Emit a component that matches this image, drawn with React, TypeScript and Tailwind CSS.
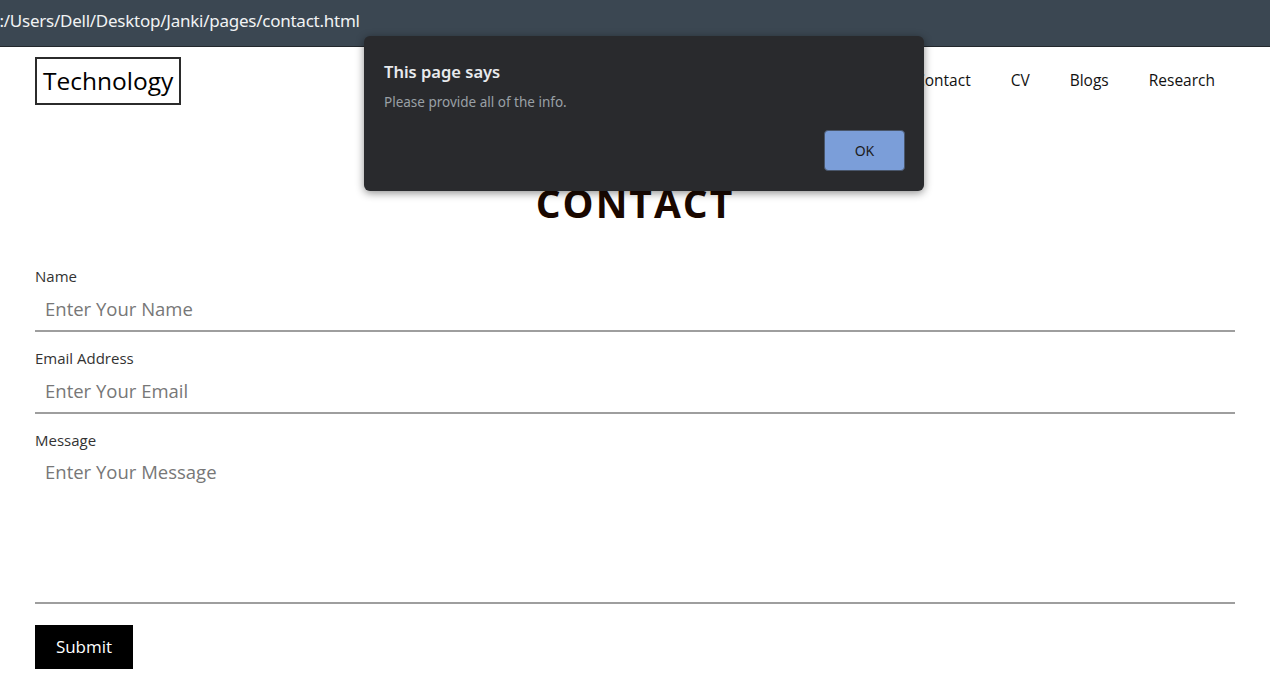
import React from "react";

export default function App() {
  const font = { fontFamily: '"Open Sans", "Noto Sans", sans-serif' } as React.CSSProperties;
  return (
    <div className="relative w-[1270px] h-[696px] overflow-hidden bg-white" style={font}>
      {/* browser address strip */}
      <div className="h-[47px] bg-[#3b4752] border-b border-[#23282d] flex items-start">
        <span className="ml-[-11px] mt-[9px] text-[17px] leading-[24px] text-[#f1f3f4] font-['Noto_Sans',sans-serif] tracking-[-0.25px] whitespace-nowrap">
          C:/Users/Dell/Desktop/Janki/pages/contact.html
        </span>
      </div>

      <div className="px-[35px]">
        {/* navbar */}
        <nav className="flex items-center justify-between pt-[10px]">
          <div className="border-2 border-[#2b2b2b] h-[48px] px-[6px] flex items-center text-[24.5px] text-black">
            Technology
          </div>
          <ul className="flex items-center text-[15.5px] text-[#111]">
            <li className="px-5">Contact</li>
            <li className="px-5">CV</li>
            <li className="px-5">Blogs</li>
            <li className="px-5">Research</li>
          </ul>
        </nav>

        <h1 className="mt-[74px] text-center text-[39px] leading-[48px] font-bold tracking-[2px] text-[#1a0800]">
          CONTACT
        </h1>

        <form className="mt-[39px] flex flex-col">
          <label className="text-[15px] leading-[20px] text-[#333]">Name</label>
          <input
            className="h-[46px] border-b-2 border-[#9e9e9e] px-[10px] text-[18.5px] outline-none placeholder:text-[#777]"
            placeholder="Enter Your Name"
          />
          <label className="mt-4 text-[15px] leading-[20px] text-[#333]">Email Address</label>
          <input
            className="h-[46px] border-b-2 border-[#9e9e9e] px-[10px] text-[18.5px] outline-none placeholder:text-[#777]"
            placeholder="Enter Your Email"
          />
          <label className="mt-4 text-[15px] leading-[20px] text-[#333]">Message</label>
          <textarea
            className="h-[154px] resize-none border-b-2 border-[#9e9e9e] px-[10px] pt-[10px] text-[18.5px] leading-[24px] outline-none placeholder:text-[#777]"
            placeholder="Enter Your Message"
          />
          <div className="mt-[21px]">
            <button type="button" className="bg-black text-white h-[44px] w-[98px] text-[17px]">
              Submit
            </button>
          </div>
        </form>
      </div>

      {/* alert dialog */}
      <div
        className="absolute left-[364px] top-[36px] w-[560px] h-[155px] rounded-[6px] bg-[#292a2d] shadow-[0_2px_8px_rgba(0,0,0,0.45)] px-[20px] pt-[24px] font-['Noto_Sans',sans-serif]"
      >
        <div className="text-[16.5px] leading-[24px] font-semibold text-[#e8eaed]">This page says</div>
        <div className="mt-[8px] text-[13.5px] leading-[20px] text-[#9aa0a6]">Please provide all of the info.</div>
        <div className="flex justify-end mt-[18px] mr-[-1px]">
          <button
            type="button"
            className="w-[81px] h-[41px] rounded-[4px] bg-[#7b9ed9] border border-[#49566b] text-[14px] text-[#1c1c1c]"
          >
            OK
          </button>
        </div>
      </div>
    </div>
  );
}
